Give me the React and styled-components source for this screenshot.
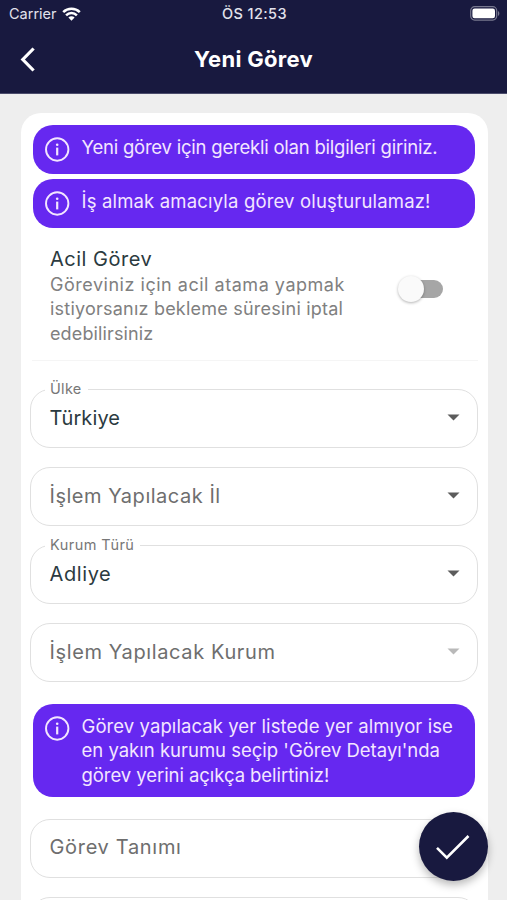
import styled, { createGlobalStyle } from "styled-components";

const GlobalStyle = createGlobalStyle`
  * {
    box-sizing: border-box;
  }

  body {
    margin: 0;
    background-color: #eeeeee;
    font-family: Inter, "Noto Sans", sans-serif;
  }
`;

const Screen = styled.div`
  position: relative;
  display: flex;
  flex-direction: column;
  height: 900px;
  overflow: hidden;
  background-color: #eeeeee;
`;

const Header = styled.header`
  flex: none;
  height: 94px;
  background-color: #18193f;
  border-bottom: 1px solid #4b4c6c;
  color: #ffffff;
`;

const StatusBar = styled.div`
  display: grid;
  grid-template-columns: 1fr auto 1fr;
  align-items: center;
  height: 27px;
  padding: 0 7px 0 9px;
`;

const StatusSide = styled.div`
  display: flex;
  align-items: center;
  justify-content: ${({ $end }) => ($end ? "flex-end" : "flex-start")};
  gap: 5px;
`;

const StatusText = styled.span`
  font-size: 14.5px;
  font-weight: ${({ $weight }) => $weight || 400};
  letter-spacing: ${({ $track }) => $track || 0}px;
  color: #e2e2ec;
`;

const NavBar = styled.div`
  display: grid;
  grid-template-columns: 60px 1fr 60px;
  align-items: center;
  height: 64px;
`;

const BackButton = styled.button`
  display: flex;
  padding: 1px 0 0 19px;
  border: 0;
  background: none;
  color: inherit;
`;

const Title = styled.h1`
  margin: 0;
  font-size: 22px;
  line-height: 30px;
  font-weight: 700;
  letter-spacing: 0.3px;
  text-align: center;
`;

const Card = styled.main`
  flex: none;
  width: 467px;
  height: 820px;
  margin: 19px 0 0 20.5px;
  padding: 12px 9.5px 0;
  border-radius: 20px;
  background-color: #ffffff;
`;

const Banner = styled.section`
  display: flex;
  gap: 12px;
  margin: 0 3px 5px 2.5px;
  padding: 10px 12px 9.5px;
  border-radius: 20px;
  background-color: #6628f0;
  color: #f3e6ff;
`;

const BannerIcon = styled.svg`
  flex: none;
  margin: 2px 0 2.5px;
`;

const Line = styled.span`
  display: block;
  width: max-content;
  white-space: nowrap;
  letter-spacing: ${({ $track }) => $track || 0}px;
`;

const BannerText = styled.p`
  margin: 0;
  font-size: 18.5px;
  line-height: 24.5px;
`;

const UrgentRow = styled.section`
  display: flex;
  align-items: flex-start;
  justify-content: space-between;
  height: 128px;
  margin: 0 0 28px 2px;
  padding: 11.5px 35.5px 0 18px;
  border-bottom: 1px solid #f5f5f5;
`;

const UrgentTitle = styled.h2`
  margin: 0;
  font-size: 20px;
  line-height: 28.2px;
  font-weight: 400;
  color: #2b3a40;
`;

const UrgentNote = styled.p`
  margin: 0;
  font-size: 18px;
  line-height: 24.4px;
  color: #808080;
`;

const SwitchTrack = styled.div`
  display: flex;
  align-items: center;
  width: 41px;
  height: 18px;
  margin-top: 35.5px;
  border-radius: 9px;
  background-color: #a6a6a6;
`;

const SwitchThumb = styled.div`
  flex: none;
  width: 26px;
  height: 26px;
  margin-left: -4px;
  border-radius: 50%;
  background-color: #fafafa;
  box-shadow: 0 1px 3px rgba(0, 0, 0, 0.3);
`;

const Field = styled.fieldset`
  display: flex;
  align-items: center;
  justify-content: space-between;
  position: relative;
  height: 59px;
  margin: 0 0 19.1px;
  padding: 0 17px 2px 18.5px;
  border: 1.5px solid #e0e0e0;
  border-radius: 20px;
`;

const FieldLabel = styled.span`
  position: absolute;
  top: -11.5px;
  left: 14px;
  padding: 0 6px 0 5px;
  background-color: #ffffff;
  font-size: 14.5px;
  line-height: 20px;
  color: #777777;
`;

const FieldText = styled.div`
  font-size: 20px;
  line-height: 26px;
  color: ${({ $filled }) => ($filled ? "#2b3a40" : "#6e6e6e")};
`;

const Arrow = styled.svg`
  fill: ${({ $disabled }) => ($disabled ? "#b9b9b9" : "#5c5c5c")};
`;

const DetailBanner = styled(Banner)`
  margin: 21.5px 3px 22px 2.5px;
`;

const ConfirmButton = styled.button`
  position: absolute;
  left: 418.5px;
  top: 812px;
  display: flex;
  align-items: center;
  justify-content: center;
  width: 69px;
  height: 69px;
  padding: 0;
  border: 0;
  border-radius: 50%;
  background-color: #18193f;
  box-shadow: 0 4px 8px rgba(0, 0, 0, 0.28);
`;

const InfoIcon = () => (
  <BannerIcon width="25" height="25" viewBox="0 0 25 25" fill="none">
    <circle cx="12.2" cy="12.5" r="11.2" stroke="#f3e6ff" strokeWidth="1.9" />
    <circle cx="12.2" cy="7.8" r="1.3" fill="#f3e6ff" />
    <path d="M12.2 10.6V18.4" stroke="#f3e6ff" strokeWidth="2.2" />
  </BannerIcon>
);

const Lines = ({ lines }) =>
  lines.map(([text, track]) => (
    <Line key={text} $track={track}>
      {text}
    </Line>
  ));

const Notice = ({ as: Box = Banner, lines }) => (
  <Box>
    <InfoIcon />
    <BannerText>
      <Lines lines={lines} />
    </BannerText>
  </Box>
);

const SelectField = ({ label, labelTrack, text, track, filled, disabled, plain }) => (
  <Field>
    {label && (
      <FieldLabel>
        <Line $track={labelTrack}>{label}</Line>
      </FieldLabel>
    )}
    <FieldText $filled={filled}>
      <Line $track={track}>{text}</Line>
    </FieldText>
    {!plain && (
      <Arrow width="13" height="7" viewBox="0 0 13 7" $disabled={disabled}>
        <path d="M0.5 0.5H12.5L6.5 6.5Z" />
      </Arrow>
    )}
  </Field>
);

const fields = [
  { label: "Ülke", labelTrack: 0.3, text: "Türkiye", track: 0.1, filled: true },
  { text: "İşlem Yapılacak İl", track: 0.52 },
  { label: "Kurum Türü", labelTrack: 0.45, text: "Adliye", track: 0.6, filled: true },
  { text: "İşlem Yapılacak Kurum", track: 0.62, disabled: true },
];

const App = () => {
  return (
    <Screen>
      <GlobalStyle />
      <Header>
        <StatusBar>
          <StatusSide>
            <StatusText>Carrier</StatusText>
            <svg width="19" height="14" viewBox="0 0 19 14" fill="none" stroke="#ffffff" strokeWidth="2.5">
              <path d="M1.2 5.1A11.8 11.8 0 0 1 17.8 5.1" />
              <path d="M4.1 8.3A7.6 7.6 0 0 1 14.9 8.3" />
              <path d="M9.5 13.8L6.4 10.6A4.4 4.4 0 0 1 12.6 10.6Z" fill="#ffffff" stroke="none" />
            </svg>
          </StatusSide>
          <StatusText $weight={500} $track={0.4}>
            ÖS 12:53
          </StatusText>
          <StatusSide $end>
            <svg width="30" height="15" viewBox="0 0 30 15" fill="none">
              <rect x="0.7" y="0.7" width="26" height="13.4" rx="4" stroke="#77788f" strokeWidth="1.2" />
              <rect x="2.4" y="2.5" width="22.6" height="9.8" rx="2.2" fill="#ffffff" />
              <path d="M28 5V10C29.8 9.2 29.8 5.8 28 5Z" fill="#77788f" />
            </svg>
          </StatusSide>
        </StatusBar>
        <NavBar>
          <BackButton aria-label="Geri">
            <svg width="16" height="25" viewBox="0 0 16 25" fill="none">
              <path d="M14.6 1.5L3.8 12.5L14.6 23.5" stroke="#ffffff" strokeWidth="3.2" />
            </svg>
          </BackButton>
          <Title>Yeni Görev</Title>
        </NavBar>
      </Header>

      <Card>
        <Notice lines={[["Yeni görev için gerekli olan bilgileri giriniz.", -0.22]]} />
        <Notice lines={[["İş almak amacıyla görev oluşturulamaz!", 0.17]]} />

        <UrgentRow>
          <div>
            <UrgentTitle>
              <Line $track={0.5}>Acil Görev</Line>
            </UrgentTitle>
            <UrgentNote>
              <Lines
                lines={[
                  ["Göreviniz için acil atama yapmak", 0.52],
                  ["istiyorsanız bekleme süresini iptal", 0.22],
                  ["edebilirsiniz", 0.13],
                ]}
              />
            </UrgentNote>
          </div>
          <SwitchTrack role="switch" aria-checked="false">
            <SwitchThumb />
          </SwitchTrack>
        </UrgentRow>

        {fields.map((field) => (
          <SelectField key={field.text} {...field} />
        ))}

        <Notice
          as={DetailBanner}
          lines={[
            ["Görev yapılacak yer listede yer almıyor ise", 0.08],
            ["en yakın kurumu seçip 'Görev Detayı'nda", 0],
            ["görev yerini açıkça belirtiniz!", -0.06],
          ]}
        />

        <SelectField text="Görev Tanımı" track={0.68} plain />
        <Field />
      </Card>

      <ConfirmButton aria-label="Onayla">
        <svg width="36" height="26" viewBox="0 0 36 26" fill="none">
          <path d="M2 13.8L11.8 23.6L33.5 2" stroke="#ffffff" strokeWidth="2.6" />
        </svg>
      </ConfirmButton>
    </Screen>
  );
};

export default App;
